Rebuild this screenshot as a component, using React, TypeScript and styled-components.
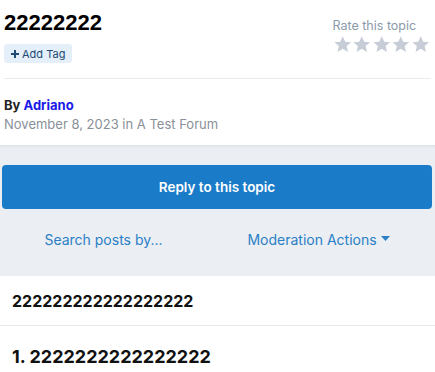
import styled, { createGlobalStyle } from 'styled-components';

const GlobalStyle = createGlobalStyle`
    body {
        margin: 0;
        background: #fff;
        font-family: Inter, 'Noto Sans', sans-serif;
        color: #111;
    }
`;

const Page = styled.div`
    width: 435px;
    overflow: hidden;
`;

const Header = styled.header`
    padding: 0 4px;
`;

const TitleRow = styled.div`
    display: flex;
    justify-content: space-between;
    align-items: flex-start;
    padding-bottom: 15px;
    border-bottom: 1px solid #e9ebee;
`;

const Title = styled.h1`
    margin: 10px 0 0;
    font-family: 'Liberation Sans', Arial, sans-serif;
    font-size: 22px;
    line-height: 26px;
    font-weight: 700;
    color: #000;
`;

const TagButton = styled.span`
    display: inline-flex;
    align-items: center;
    gap: 3px;
    margin-top: 8px;
    padding: 0 7px;
    height: 19px;
    border-radius: 3px;
    background: #e4eff9;
    color: #1d4b73;
    font-size: 11px;
`;

const Rating = styled.div`
    display: flex;
    flex-direction: column;
    align-items: flex-start;
    margin-top: 18px;
    margin-right: 1px;
`;

const RatingLabel = styled.span`
    font-size: 12.5px;
    color: #8b99aa;
    line-height: 16px;
`;

const Stars = styled.div`
    display: flex;
    margin-top: 1px;
`;

const Meta = styled.div`
    padding: 17px 0 11px;
    font-size: 13px;
    line-height: 19px;
`;

const By = styled.div`
    font-weight: 700;
    color: #222;
`;

const Author = styled.a`
    color: #1a1ae8;
    text-decoration: none;
`;

const DateLine = styled.div`
    color: #8a8f99;
`;

const Actions = styled.section`
    background: #ebeef3;
    box-shadow: inset 0 3px 3px -2px rgba(0, 0, 0, 0.08);
    padding: 20px 3px 27px 2px;
`;

const ReplyButton = styled.button`
    display: block;
    width: 100%;
    height: 44px;
    border: 0;
    border-radius: 4px;
    background: #1a7cc8;
    color: #fff;
    font-family: Inter, sans-serif;
    font-size: 13.5px;
    font-weight: 600;
`;

const LinkRow = styled.div`
    display: flex;
    justify-content: space-around;
    align-items: center;
    margin-top: 20px;
    height: 20px;
`;

const ActionLink = styled.a`
    display: flex;
    align-items: center;
    gap: 4px;
    color: #2a80c6;
    font-size: 14px;
    text-decoration: none;
`;

const PostTitle = styled.div<{ $size: number; $tall: number }>`
    display: flex;
    align-items: center;
    padding: 0 12px;
    height: ${p => p.$tall}px;
    font-size: ${p => p.$size}px;
    font-weight: 700;
    color: #111;
    & + & {
        border-top: 1px solid #e9ebee;
    }
`;

const Star = () => (
    <svg width="19.5" height="19" viewBox="0 0 24 24">
        <path
            fill="#c6cdd7"
            d="M12 1.5l3.1 7 7.4.6-5.6 4.9 1.7 7.4L12 17.5l-6.6 3.9 1.7-7.4L1.5 9.1l7.4-.6z"
        />
    </svg>
);

const App = () => (
    <Page>
        <GlobalStyle />
        <Header>
            <TitleRow>
                <div>
                    <Title>22222222</Title>
                    <TagButton>
                        <svg width="8" height="8" viewBox="0 0 8 8">
                            <path d="M3 0h2v3h3v2H5v3H3V5H0V3h3z" fill="#1d4b73" />
                        </svg>
                        Add Tag
                    </TagButton>
                </div>
                <Rating>
                    <RatingLabel>Rate this topic</RatingLabel>
                    <Stars>
                        {[0, 1, 2, 3, 4].map(i => <Star key={i} />)}
                    </Stars>
                </Rating>
            </TitleRow>
            <Meta>
                <By>By <Author href="#">Adriano</Author></By>
                <DateLine>November 8, 2023 in A Test Forum</DateLine>
            </Meta>
        </Header>
        <Actions>
            <ReplyButton>Reply to this topic</ReplyButton>
            <LinkRow>
                <ActionLink href="#">Search posts by...</ActionLink>
                <ActionLink href="#">
                    Moderation Actions
                    <svg width="9" height="6" viewBox="0 0 9 6">
                        <path d="M0 0h9L4.5 5z" fill="#2a80c6" />
                    </svg>
                </ActionLink>
            </LinkRow>
        </Actions>
        <PostTitle $size={16} $tall={49}>222222222222222222</PostTitle>
        <PostTitle $size={18} $tall={60}>1. 2222222222222222</PostTitle>
    </Page>
);

export default App;
